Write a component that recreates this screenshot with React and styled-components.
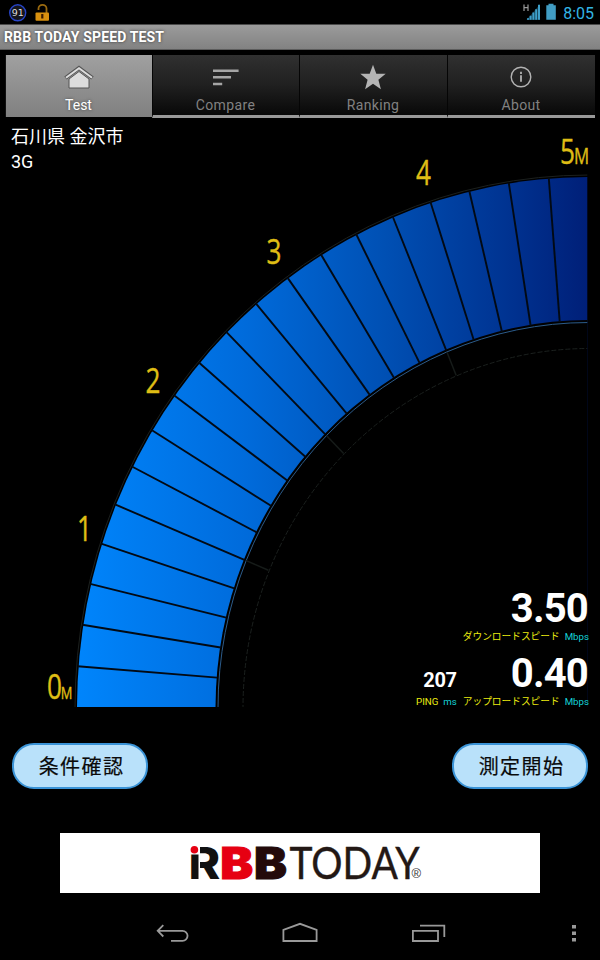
import styled, { createGlobalStyle } from 'styled-components';

const GlobalStyle = createGlobalStyle`
	body {
		margin:0;
		background-color:black;
		overflow:hidden;
	}
`

const Screen = styled.div`
	width:600px;
	height:960px;
	display:flex;
	flex-direction:column;
	background-color:black;
	color:white;
	font-family:Roboto, "Noto Sans CJK JP", sans-serif;
	overflow:hidden;
`

const StatusBar = styled.div`
	height:24px;
	flex:none;
	box-sizing:border-box;
	padding:0 6px 0 8px;
	display:flex;
	justify-content:space-between;
`

const StatusGroup = styled.div`
	display:flex;
`

const Clock = styled.span`
	color:#33b5e5;
	font-size:16px;
	line-height:27px;
	margin-left:7px;
`

const TitleBar = styled.h1`
	height:26px;
	flex:none;
	box-sizing:border-box;
	margin:0;
	padding-left:4px;
	border-top:1px solid #4a4a4a;
	border-bottom:1px solid #5c5c5c;
	background:linear-gradient(#9b9b9b, #828282);
	font-size:14px;
	line-height:25px;
	letter-spacing:0.15px;
	font-weight:bold;
	text-shadow:0 0 3px #333;
`

const Tabs = styled.nav`
	height:69px;
	flex:none;
	box-sizing:border-box;
	padding:5px 5px 0;
	display:grid;
	grid-template-columns:147px 147px 148px 148px;
`

const Tab = styled.div`
	box-sizing:border-box;
	height:${p => p.$active ? '62px' : '63px'};
	display:flex;
	flex-direction:column;
	align-items:center;
	padding:9px 1px 0 0;
	border-left:1px solid ${p => p.$active ? '#111' : '#050505'};
	border-bottom:${p => p.$active ? 'none' : '3px solid #999'};
	background:${p => p.$active ? 'linear-gradient(#a0a0a0, #808080)' : 'linear-gradient(#303030, #202020 50%, #080808)'};
	color:${p => p.$active ? '#fff' : '#818181'};
	font-size:14px;
	line-height:18px;
	letter-spacing:${p => p.$spacing || 0}px;
	text-shadow:${p => p.$active ? '0 0 3px #444' : 'none'};

	svg {
		margin-bottom:6px;
		flex:none;
	}
`

const Meter = styled.main`
	height:602px;
	flex:none;
	display:grid;
	grid-template:602px / 600px;

	> * {
		grid-area:1 / 1;
	}
`

const Place = styled.div`
	padding:5px 11px;
	font-size:18px;
	line-height:25px;
`

const Results = styled.div`
	align-self:end;
	justify-self:end;
	display:grid;
	grid-template-columns:auto auto;
	column-gap:6px;
	padding:0 11px 12px 0;
	justify-items:end;
`

const Result = styled.div`
	grid-column:${p => p.$col};
	display:flex;
	flex-direction:column;
	align-items:flex-end;
	justify-content:flex-end;
	height:65px;
`

const Value = styled.div`
	font-weight:bold;
	font-size:${p => p.$small ? 20 : 40}px;
	line-height:${p => p.$small ? 30 : 40}px;
	letter-spacing:${p => p.$small ? -0.3 : -0.8}px;
	margin-right:${p => p.$small ? 0 : 1}px;
	margin-bottom:${p => p.$small ? 0 : 1}px;
`

const Caption = styled.div`
	display:flex;
	gap:5px;
	font-size:9.7px;
	line-height:14px;
	color:#ecec10;

	em {
		font-style:normal;
		color:#14d2d8;
	}
`

const Actions = styled.div`
	height:112px;
	flex:none;
	box-sizing:border-box;
	padding:22px 12px 0;
	display:flex;
	justify-content:space-between;
`

const Button = styled.button`
	width:136px;
	height:46px;
	padding:0 0 0 3px;
	border:2px solid #3a93d6;
	border-radius:22px;
	background-color:#b9e1fa;
	color:#0a0a0a;
	font-family:"Noto Sans CJK JP", sans-serif;
	font-size:20px;
	line-height:40px;
	letter-spacing:1.4px;
	-webkit-text-stroke:0.2px #0a0a0a;
`

const Banner = styled.div`
	width:480px;
	height:60px;
	flex:none;
	align-self:center;
	background-color:white;
`

const NavBar = styled.footer`
	height:67px;
	flex:none;
`

// dial geometry, the ellipse is a bit taller than wide
const CX = 589;
const CY = 589;
const point = (rx, ry, deg) => {
	const a = deg * Math.PI / 180;
	return [CX - rx * Math.cos(a), CY - ry * Math.sin(a)];
}

const Spoke = ({deg, from, to, ...rest}) => {
	const [x1, y1] = point(from[0], from[1], deg);
	const [x2, y2] = point(to[0], to[1], deg);
	return <line x1={x1} y1={y1} x2={x2} y2={y2} {...rest}/>
}

const marks = [
	{text:'0', x:47, y:579.5},
	{text:'1', x:77, y:422},
	{text:'2', x:145.5, y:273.7},
	{text:'3', x:266.5, y:144.5},
	{text:'4', x:416, y:66.2},
	{text:'5', x:560, y:44.5},
];

const units = [
	{x:60.8, y:579.5, size:17, scale:0.76},
	{x:574, y:44.5, size:21, scale:0.8},
];

const Dial = () => (
	<svg width="600" height="602" viewBox="0 0 600 602">
		<defs>
			<linearGradient id="blue" gradientUnits="userSpaceOnUse" x1="77" y1="0" x2="588" y2="0">
				<stop offset="0" stopColor="#0085fc"/>
				<stop offset="0.33" stopColor="#006bdb"/>
				<stop offset="0.6" stopColor="#0050b4"/>
				<stop offset="0.85" stopColor="#003290"/>
				<stop offset="1" stopColor="#001f78"/>
			</linearGradient>
			<clipPath id="quarter">
				<rect x="0" y="0" width="587.3" height="588"/>
			</clipPath>
		</defs>
		<g clipPath="url(#quarter)">
			<ellipse cx={CX} cy={CY} rx="514" ry="533" fill="none" stroke="#1c201e"/>
			<ellipse cx={CX} cy={CY} rx="512" ry="531" fill="url(#blue)"/>
			<ellipse cx={CX} cy={CY} rx="373.5" ry="388" fill="black"/>
			<ellipse cx={CX} cy={CY} rx="371" ry="385.5" fill="none" stroke="#2b5b8a"/>
			<ellipse cx={CX} cy={CY} rx="346" ry="359.5" fill="none" stroke="#1b201e" strokeDasharray="5 2"/>
			{Array.from({length:19}, (_, i) => (
				<Spoke key={i} deg={(i + 1) * 4.5} from={[513, 532]} to={[373, 387]} stroke="#020a14" strokeWidth="1.9"/>
			))}
			{[22.5, 45, 67.5].map(deg => (
				<Spoke key={deg} deg={deg} from={[371, 385]} to={[347, 360]} stroke="#161b19" strokeWidth="1.5"/>
			))}
		</g>
		<g fill="#dfbd15" stroke="#dfbd15" strokeWidth="0.4" fontFamily="Open Sans, sans-serif">
			{marks.map(m => (
				<text key={m.text} transform={`translate(${m.x} ${m.y}) scale(0.77 1)`} fontSize="34">{m.text}</text>
			))}
			{units.map(u => (
				<text key={u.x} transform={`translate(${u.x} ${u.y}) scale(${u.scale} 1)`} fontSize={u.size}>M</text>
			))}
		</g>
	</svg>
)

const Logo = () => (
	<svg width="480" height="60" viewBox="60 833 480 60">
		<g fontFamily="Inter, sans-serif" fontWeight="900" fontSize="44">
			<text transform="translate(188.6 879) scale(1.09 1)" fill="#111" fontWeight="800">R</text>
			<text transform="translate(220.3 879) scale(1.12 1)" fill="#e60012" stroke="#e60012">B</text>
			<text transform="translate(254 879) scale(1.12 1)" fill="#230a0a" stroke="#230a0a">B</text>
		</g>
		{/* cuts the stem off so it reads as an i with a red dot */}
		<path d="M190 845h10v35h-1.5v-25.500H190z" fill="white"/>
		<circle cx="194.4" cy="849.7" r="3.8" fill="#e60012"/>
		<text x="289.5" y="879" fill="#231815" stroke="#231815" strokeWidth="0.4" fontFamily="Lato, sans-serif" fontSize="44.5" textLength="130" lengthAdjust="spacingAndGlyphs">TODAY</text>
		<text x="411.5" y="878" fill="#333" fontFamily="Liberation Sans, sans-serif" fontSize="13">®</text>
	</svg>
)

const App = () => (
	<Screen>
		<GlobalStyle/>
		<StatusBar>
			<StatusGroup>
				<svg width="44" height="24">
					<circle cx="9.7" cy="12.8" r="8" fill="#15161c" stroke="#2744c8" strokeWidth="1.4"/>
					<text x="9.7" y="16.2" textAnchor="middle" fontSize="9.5" fontWeight="500" fill="#ddd" fontFamily="DejaVu Sans, sans-serif">91</text>
					<path d="M30.5 10V8.500a4 3.6 0 0 1 8 0V13" fill="none" stroke="#9a6a10" strokeWidth="1.8"/>
					<rect x="27.5" y="12.5" width="13.5" height="8.3" rx="1" fill="#d8900f"/>
					<path d="M34.3 14v4.5" stroke="#3a1a00" strokeWidth="2.2"/>
				</svg>
			</StatusGroup>
			<StatusGroup>
				<svg width="34" height="24">
					<path d="M2 4.5V11M6 4.5V11M2 7.7h4" stroke="#999" strokeWidth="1.2"/>
					<path d="M4.5 20L18 4.2V20z" fill="#123848"/>
					<path d="M6 19.7v-1.4M8.6 19.7v-4M11.4 19.7v-7.2M14.2 19.7v-10.5M17 19.7V4.8" stroke="#3d9fca" strokeWidth="2"/>
					<path d="M24.3 5.3h2.2V3.8h5v1.5h2.3v14.5h-9.5z" fill="#419dc4"/>
				</svg>
				<Clock>8:05</Clock>
			</StatusGroup>
		</StatusBar>
		<TitleBar>RBB TODAY SPEED TEST</TitleBar>
		<Tabs>
			<Tab $active>
				<svg width="32" height="26">
					<path d="M6 15L16 7.5 26 15v9H6z" fill="#dcdcdc" stroke="#555" strokeWidth="1"/>
					<path d="M2.5 14L16 4l13.5 10" fill="none" stroke="#555" strokeWidth="4"/>
					<path d="M3 13.8L16 4.2l13 9.6" fill="none" stroke="#ddd" strokeWidth="2"/>
				</svg>
				Test
			</Tab>
			<Tab $spacing={0.35}>
				<svg width="32" height="26">
					<path d="M3 6.7h25.6M3 13.3h18M3 20h9.2" stroke="#a5a5a5" strokeWidth="2.6"/>
				</svg>
				Compare
			</Tab>
			<Tab $spacing={0.35}>
				<svg width="32" height="26">
					<path d="M16 .8l3.3 9h9.4l-7.3 6 2.5 9.4-7.9-5.4-7.9 5.4 2.5-9.4-7.3-6h9.4z" fill="#b4b4b4"/>
				</svg>
				Ranking
			</Tab>
			<Tab $spacing={0.35}>
				<svg width="32" height="26">
					<circle cx="16" cy="13" r="9.8" fill="none" stroke="#b2b2b2" strokeWidth="1.4"/>
					<path d="M16 11.3v6.5M16 7.8V10" stroke="#b2b2b2" strokeWidth="1.8"/>
				</svg>
				About
			</Tab>
		</Tabs>
		<Meter>
			<Dial/>
			<Place>
				<div>石川県 金沢市</div>
				<div>3G</div>
			</Place>
			<Results>
				<Result $col="2">
					<Value>3.50</Value>
					<Caption>ダウンロードスピード <em>Mbps</em></Caption>
				</Result>
				<Result $col="1">
					<Value $small>207</Value>
					<Caption>PING <em>ms</em></Caption>
				</Result>
				<Result $col="2">
					<Value>0.40</Value>
					<Caption>アップロードスピード <em>Mbps</em></Caption>
				</Result>
			</Results>
		</Meter>
		<Actions>
			<Button>条件確認</Button>
			<Button>測定開始</Button>
		</Actions>
		<Banner>
			<Logo/>
		</Banner>
		<NavBar>
			<svg width="600" height="67" viewBox="0 893 600 67" fill="none" stroke="#999" strokeWidth="1.8">
				<path d="M163.3 925.2l-5.6 5.6 5.6 5.7M158 930.8h24.5a5 5 0 0 1 0 10.1H171"/>
				<path d="M283.4 941v-11.2l16.6-6 16.6 6V941z"/>
				<path d="M412.9 930.8H438V941h-25.1zM420 925.7h24.3V937"/>
				<path d="M574 925v3.6M574 931.5v3.6M574 938v3.6" strokeWidth="4"/>
			</svg>
		</NavBar>
	</Screen>
)

export default App;
